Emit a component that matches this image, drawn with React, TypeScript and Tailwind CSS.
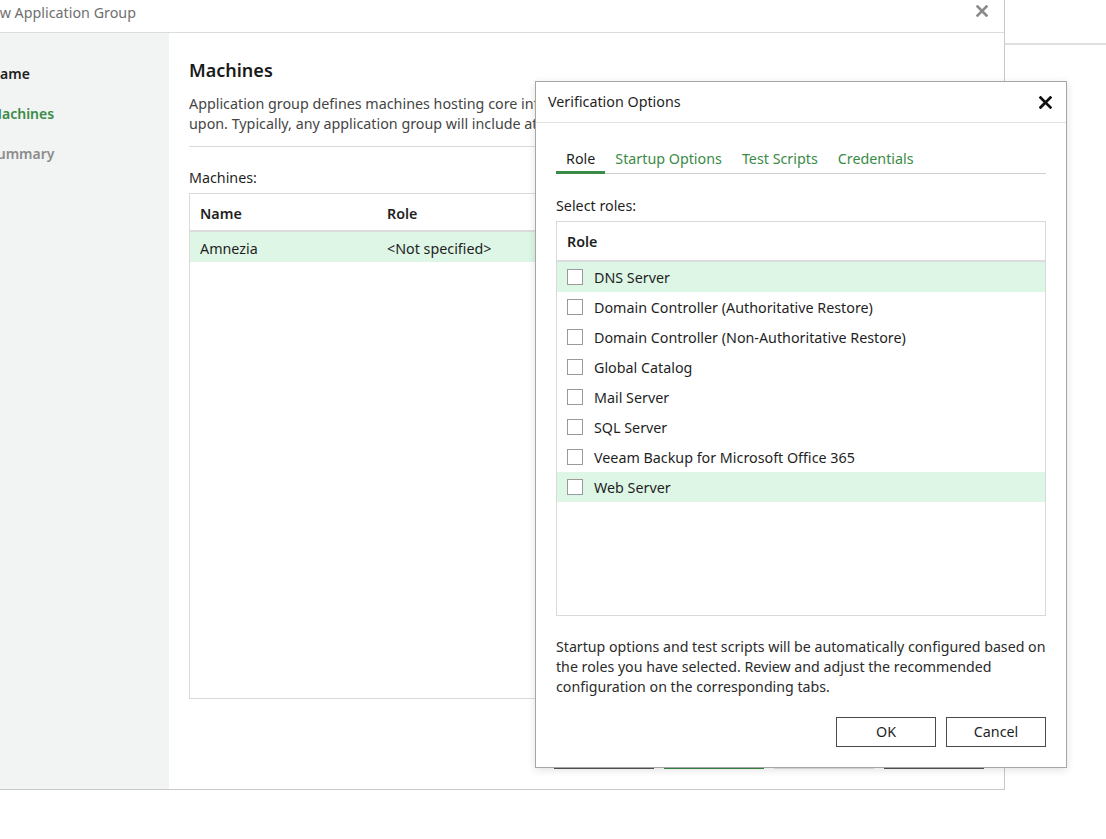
import React from "react";

const ROLES = [
  { name: "DNS Server", highlight: true },
  { name: "Domain Controller (Authoritative Restore)", highlight: false },
  { name: "Domain Controller (Non-Authoritative Restore)", highlight: false },
  { name: "Global Catalog", highlight: false },
  { name: "Mail Server", highlight: false },
  { name: "SQL Server", highlight: false },
  { name: "Veeam Backup for Microsoft Office 365", highlight: false },
  { name: "Web Server", highlight: true },
];

const STEPS = [
  { label: "Name", className: "text-[#1f1f1f]" },
  { label: "Machines", className: "text-[#3a8b47]" },
  { label: "Summary", className: "text-[#8c8c8c]" },
];

function CloseIcon({ color, size = 12 }: { color: string; size?: number }) {
  return (
    <svg width={size} height={size} viewBox="0 0 12 12" fill="none">
      <path d="M1.5 1.5l9 9M10.5 1.5l-9 9" stroke={color} strokeWidth="2.6" strokeLinecap="square" />
    </svg>
  );
}

function VerificationDialog() {
  return (
    <div className="absolute left-[535px] top-[81px] w-[532px] h-[687px] bg-white border border-[#a6a6a6] shadow-[0_2px_8px_rgba(0,0,0,0.12)] flex flex-col">
      {/* Title bar */}
      <div className="h-[41px] shrink-0 flex items-center justify-between pl-[12px] pr-[14px] border-b border-[#e3e3e3]">
        <span className="text-[14.3px] text-[#1f1f1f]">Verification Options</span>
        <CloseIcon color="#111" size={13} />
      </div>

      <div className="flex flex-col px-[20px]">
        {/* Tabs */}
        <div className="mt-[26px] flex border-b border-[#cfcfcf]">
          {["Role", "Startup Options", "Test Scripts", "Credentials"].map((tab, i) => (
            <div
              key={tab}
              className={`-mb-px px-[10px] pb-[2px] h-[25px] leading-[20px] text-[14.3px] border-b-[3px] ${
                i === 0 ? "border-[#3a8b47] text-[#1f1f1f]" : "border-transparent text-[#3a8b47]"
              }`}
            >
              {tab}
            </div>
          ))}
        </div>

        <div className="mt-[22px] h-[20px] leading-[20px] text-[14.3px] text-[#1f1f1f]">Select roles:</div>

        {/* Roles list */}
        <div className="mt-[5px] h-[395px] border border-[#d9d9d9] flex flex-col">
          <div className="h-[40px] shrink-0 flex items-center pt-[2px] pl-[10px] border-b-2 border-[#dcdcdc] text-[14.3px] font-semibold text-[#1f1f1f]">
            Role
          </div>
          {ROLES.map((role) => (
            <div
              key={role.name}
              className={`h-[30px] flex items-center pl-[10px] gap-[11px] text-[14.3px] text-[#1f1f1f] ${
                role.highlight ? "bg-[#ddf6e6]" : ""
              }`}
            >
              <span className="w-[16px] h-[16px] bg-white border border-[#9a9a9a]" />
              <span className="pt-[1px]">{role.name}</span>
            </div>
          ))}
        </div>

        <p className="mt-[21px] text-[14.2px] leading-[20px] text-[#2b2b2b] whitespace-nowrap">
          Startup options and test scripts will be automatically configured based on
          <br />
          the roles you have selected. Review and adjust the recommended
          <br />
          configuration on the corresponding tabs.
        </p>

        <div className="mt-[20px] flex justify-end gap-[10px]">
          <button className="w-[100px] h-[30px] border border-[#4a4a4a] bg-white text-[14.3px] text-[#1f1f1f]">OK</button>
          <button className="w-[100px] h-[30px] border border-[#4a4a4a] bg-white text-[14.3px] text-[#1f1f1f]">Cancel</button>
        </div>
      </div>
    </div>
  );
}

export default function App() {
  return (
    <div
      className="relative w-[1106px] h-[839px] overflow-hidden bg-white flex items-start"
      style={{ fontFamily: '"Noto Sans", "Open Sans", sans-serif' }}
    >
      {/* Wizard window */}
      <div className="ml-[-38px] w-[1043px] h-[790px] shrink-0 flex flex-col bg-white border-r border-b border-[#c9c9c9]">
        <div className="h-[33px] shrink-0 flex items-start justify-between pt-[3px] pl-[19px] pr-[16px] border-b border-[#dcdcdc]">
          <span className="h-[20px] leading-[20px] text-[14.3px] text-[#707070]">New Application Group</span>
          <span className="pt-[2px]">
            <CloseIcon color="#8a8a8a" size={12} />
          </span>
        </div>

        <div className="flex flex-1">
          {/* Steps */}
          <div className="w-[207px] shrink-0 bg-[#f2f3f3] pt-[31px] pl-[27px] flex flex-col gap-[20px]">
            {STEPS.map((s) => (
              <div key={s.label} className={`h-[20px] leading-[20px] text-[14px] font-semibold ${s.className}`}>
                {s.label}
              </div>
            ))}
          </div>

          {/* Step content */}
          <div className="flex-1 flex flex-col px-[20px] pt-[25px] pb-[20px]">
            <h2 className="h-[24px] leading-[24px] text-[18px] font-semibold text-[#1a1a1a]">Machines</h2>
            <p className="mt-[12px] pb-[12px] border-b border-[#dadada] text-[14.3px] leading-[20px] text-[#454545] whitespace-nowrap overflow-hidden">
              Application group defines machines hosting core infrastructure components that the verified machines depend
              <br />
              upon. Typically, any application group will include at least a domain controller and DNS server.
            </p>
            <div className="mt-[21px] h-[20px] leading-[20px] text-[14.3px] text-[#1f1f1f]">Machines:</div>

            <div className="mt-[5px] flex-1 border border-[#dadada] flex flex-col">
              <div className="h-[38px] shrink-0 flex items-center pt-[3px] border-b-2 border-[#dcdcdc] text-[14.3px] font-semibold text-[#1f1f1f]">
                <span className="w-[197px] pl-[10px]">Name</span>
                <span>Role</span>
              </div>
              <div className="h-[30px] flex items-center pt-[3px] bg-[#ddf6e6] text-[14.3px] text-[#1f1f1f]">
                <span className="w-[197px] pl-[10px]">Amnezia</span>
                <span>&lt;Not specified&gt;</span>
              </div>
            </div>

            <div className="mt-[41px] flex justify-end gap-[10px]">
              <button className="w-[100px] h-[29px] border border-[#555] bg-white text-[14px]">&lt; Previous</button>
              <button className="w-[100px] h-[29px] border border-[#3a8b47] bg-[#3a8b47] text-white text-[14px]">Next &gt;</button>
              <button className="w-[100px] h-[29px] border border-[#e1e1e1] bg-[#f1f1f1] text-[#9a9a9a] text-[14px]">Finish</button>
              <button className="w-[100px] h-[29px] border border-[#555] bg-white text-[14px]">Cancel</button>
            </div>
          </div>
        </div>
      </div>

      {/* Backdrop page edge */}
      <div className="flex-1 h-[45px] border-b-2 border-[#e0e0e0]" />

      <VerificationDialog />
    </div>
  );
}
